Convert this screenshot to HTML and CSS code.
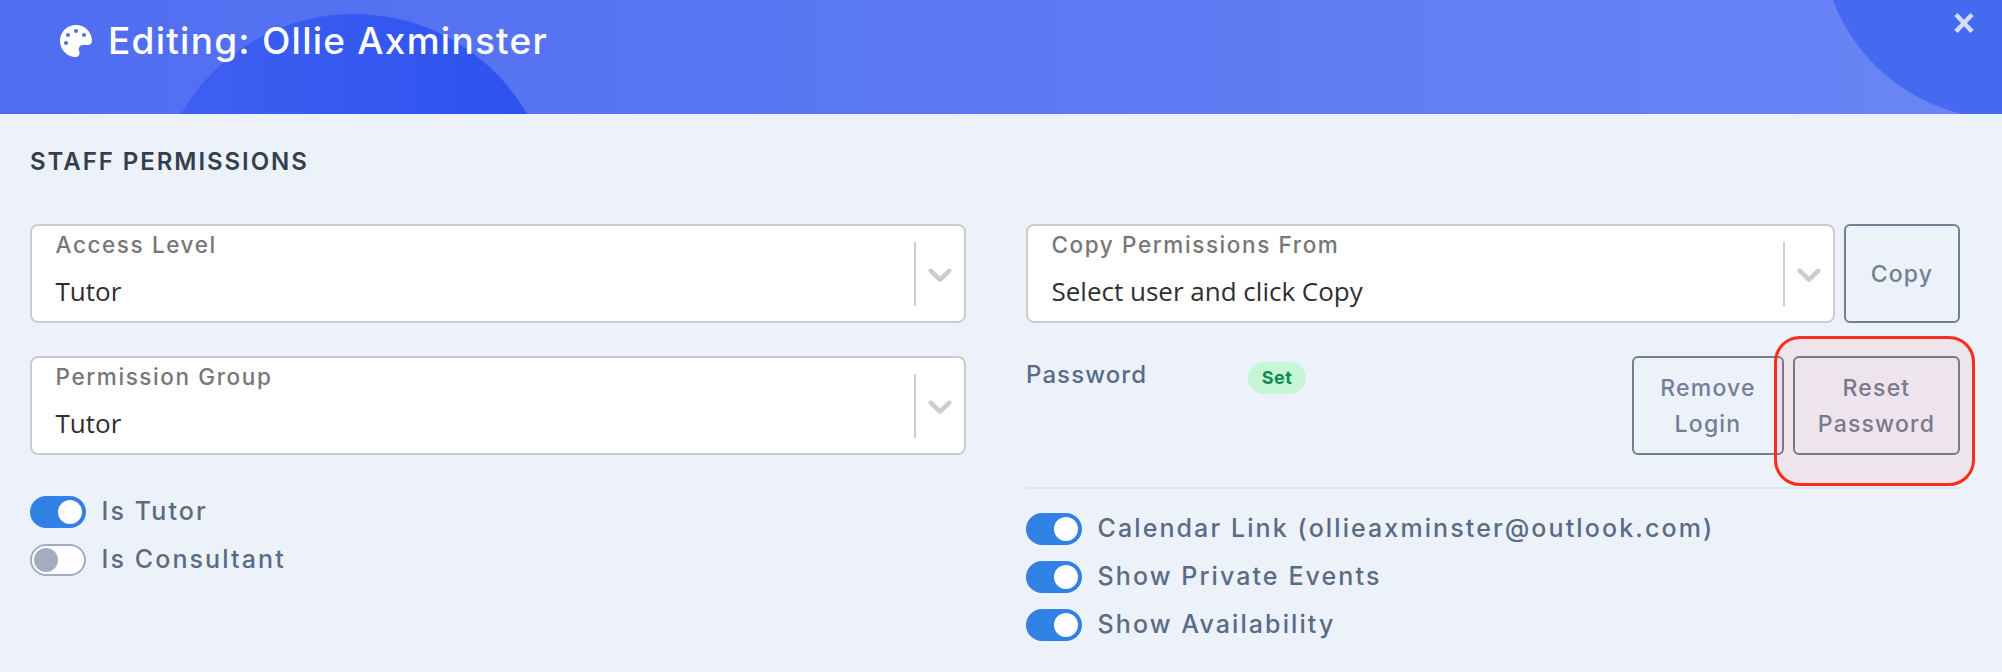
FILE: index.html
```html
<!DOCTYPE html>
<html lang="en">
<head>
<meta charset="utf-8">
<title>Editing: Ollie Axminster</title>
<link rel="stylesheet" href="styles.css">
</head>
<body>
<div class="modal">
  <header class="hero">
    <span class="blob blob-left"></span>
    <span class="blob blob-right"></span>
    <h1 class="hero-title">
      <svg class="palette" viewBox="0 0 512 512" aria-hidden="true"><path d="M204.3 5C104.9 24.4 24.8 104.3 5.2 203.4c-37 187 131.7 326.4 258.8 306.7 41.2-6.4 61.4-54.6 42.5-91.7-23.1-45.4 9.9-98.4 60.9-98.4h79.7c35.8 0 64.8-29.6 64.9-65.3C511.5 97.1 368.1-26.9 204.3 5zM96 320c-17.7 0-32-14.3-32-32s14.3-32 32-32 32 14.3 32 32-14.3 32-32 32zm32-128c-17.7 0-32-14.3-32-32s14.3-32 32-32 32 14.3 32 32-14.3 32-32 32zm128-64c-17.7 0-32-14.3-32-32s14.3-32 32-32 32 14.3 32 32-14.3 32-32 32zm128 64c-17.7 0-32-14.3-32-32s14.3-32 32-32 32 14.3 32 32-14.3 32-32 32z"/></svg>
      <span>Editing: Ollie Axminster</span>
    </h1>
    <svg class="close" viewBox="0 0 20 22" aria-hidden="true"><path d="M2 2.5 18 19.5M18 2.5 2 19.5"/></svg>
  </header>

  <main class="content">
    <h2 class="section-title">STAFF PERMISSIONS</h2>
    <div class="columns">
      <section class="col">
        <div class="select">
          <div class="select-body"><span class="select-label">Access Level</span><span class="select-value">Tutor</span></div>
          <span class="select-sep"></span>
          <svg class="chevron" viewBox="0 0 20 20" aria-hidden="true"><path d="M4.516 7.548c0.436-0.446 1.043-0.481 1.576 0l3.908 3.747 3.908-3.747c0.533-0.481 1.141-0.446 1.574 0 0.436 0.445 0.408 1.197 0 1.615-0.406 0.418-4.695 4.502-4.695 4.502-0.217 0.223-0.502 0.335-0.787 0.335s-0.57-0.112-0.789-0.335c0 0-4.287-4.084-4.695-4.502s-0.436-1.17 0-1.615z"/></svg>
        </div>
        <div class="select">
          <div class="select-body"><span class="select-label">Permission Group</span><span class="select-value">Tutor</span></div>
          <span class="select-sep"></span>
          <svg class="chevron" viewBox="0 0 20 20" aria-hidden="true"><path d="M4.516 7.548c0.436-0.446 1.043-0.481 1.576 0l3.908 3.747 3.908-3.747c0.533-0.481 1.141-0.446 1.574 0 0.436 0.445 0.408 1.197 0 1.615-0.406 0.418-4.695 4.502-4.695 4.502-0.217 0.223-0.502 0.335-0.787 0.335s-0.57-0.112-0.789-0.335c0 0-4.287-4.084-4.695-4.502s-0.436-1.17 0-1.615z"/></svg>
        </div>
        <div class="toggles toggles-left">
          <div class="toggle-row"><span class="toggle on"></span><span class="toggle-label">Is Tutor</span></div>
          <div class="toggle-row"><span class="toggle"></span><span class="toggle-label">Is Consultant</span></div>
        </div>
      </section>

      <section class="col">
        <div class="copy-row">
          <div class="select select-grow">
            <div class="select-body"><span class="select-label">Copy Permissions From</span><span class="select-value">Select user and click Copy</span></div>
            <span class="select-sep"></span>
            <svg class="chevron" viewBox="0 0 20 20" aria-hidden="true"><path d="M4.516 7.548c0.436-0.446 1.043-0.481 1.576 0l3.908 3.747 3.908-3.747c0.533-0.481 1.141-0.446 1.574 0 0.436 0.445 0.408 1.197 0 1.615-0.406 0.418-4.695 4.502-4.695 4.502-0.217 0.223-0.502 0.335-0.787 0.335s-0.57-0.112-0.789-0.335c0 0-4.287-4.084-4.695-4.502s-0.436-1.17 0-1.615z"/></svg>
          </div>
          <button class="btn btn-copy">Copy</button>
        </div>
        <div class="password-row">
          <span class="password-label">Password</span>
          <span class="badge">Set</span>
          <div class="password-actions">
            <button class="btn btn-remove">Remove<br>Login</button>
            <button class="btn btn-reset">Reset<br>Password</button>
          </div>
        </div>
        <hr class="divider">
        <div class="toggles">
          <div class="toggle-row"><span class="toggle on"></span><span class="toggle-label">Calendar Link (ollieaxminster@outlook.com)</span></div>
          <div class="toggle-row"><span class="toggle on"></span><span class="toggle-label">Show Private Events</span></div>
          <div class="toggle-row"><span class="toggle on"></span><span class="toggle-label">Show Availability</span></div>
        </div>
      </section>
    </div>
  </main>
</div>
</body>
</html>
```
FILE: styles.css
```css
* { box-sizing: border-box; }
html, body { margin: 0; height: 100%; }
body {
  background: #edf2fa;
  font-family: "Inter", "Liberation Sans", sans-serif;
  overflow: hidden;
}
.modal { height: 672px; }

.hero {
  position: relative;
  height: 114px;
  overflow: hidden;
  background: linear-gradient(90deg, #4f6df0 0%, #6a85f5 100%);
}
.blob { position: absolute; border-radius: 50%; }
.blob-left {
  left: 154px; top: 14px;
  width: 400px; height: 400px;
  background: linear-gradient(90deg, #3f61f1, #2c51ef);
}
.blob-right {
  left: 1821px; top: -249px;
  width: 368px; height: 368px;
  background: #4669f1;
}
.hero-title {
  position: relative;
  margin: 0;
  display: flex;
  align-items: center;
  gap: 16px;
  padding: 23px 0 0 60px;
  color: #fff;
  font-weight: 500;
  font-size: 37px;
  line-height: 36px;
  letter-spacing: 1.25px;
}
.palette { width: 32px; height: 32px; fill: #fff; flex: none; }
.close {
  position: absolute;
  right: 28px; top: 12px;
  width: 20px; height: 22px;
  fill: none;
  stroke: #d6dcfc;
  stroke-width: 4.5;
}

.content { padding: 36px 42px 0 30px; }
.section-title {
  margin: 0 0 50px;
  height: 24px;
  font-size: 24px;
  line-height: 24px;
  font-weight: 600;
  letter-spacing: 1.95px;
  color: #333f50;
}
.columns { display: grid; grid-template-columns: 936px 1fr; column-gap: 60px; }
.col { display: flex; flex-direction: column; }

.select {
  display: flex;
  align-items: center;
  height: 99px;
  background: #fff;
  border: 2px solid #cccccc;
  border-radius: 8px;
}
.select + .select { margin-top: 33px; }
.select-grow { flex: 1; }
.select-body {
  flex: 1;
  display: flex;
  flex-direction: column;
  align-self: stretch;
  padding: 4px 24px 0 23.5px;
}
.select-label {
  font-size: 22.5px;
  font-weight: 500;
  line-height: 30px;
  color: #777;
  letter-spacing: 1.6px;
}
.select-value {
  margin-top: 16px;
  font-family: "Open Sans", "Liberation Sans", sans-serif;
  font-size: 26px;
  line-height: 30px;
  color: #2f2f2f;
}
.select-sep { width: 2px; height: 64px; background: #cccccc; flex: none; }
.chevron { width: 40px; height: 40px; margin: 0 4px 0 4px; fill: #cccccc; flex: none; }

.copy-row { display: flex; gap: 9px; }
.btn {
  background: transparent;
  border: 2px solid #718096;
  border-radius: 6px;
  height: 99px;
  padding: 0;
  font-family: inherit;
  font-size: 23px;
  font-weight: 500;
  line-height: 36px;
  color: #718096;
  letter-spacing: 1.2px;
}
.btn-copy { width: 116px; flex: none; }

.password-row {
  display: flex;
  align-items: flex-start;
  margin-top: 33px;
}
.password-label {
  width: 222px;
  padding-top: 4px;
  font-size: 24px;
  font-weight: 500;
  line-height: 30px;
  color: #5a6b85;
  letter-spacing: 1.1px;
}
.badge {
  margin-top: 6px;
  width: 58px;
  height: 32px;
  border-radius: 16px;
  background: #c6f6d5;
  color: #0f8a4e;
  font-size: 18px;
  font-weight: 700;
  line-height: 32px;
  letter-spacing: 0.4px;
  text-align: center;
}
.password-actions { display: flex; gap: 9px; margin-left: auto; }
.btn-remove { width: 152px; }
.btn-reset { width: 167px; position: relative; }
.btn-reset::after {
  content: "";
  position: absolute;
  left: -21px; right: -17px; top: -22px; bottom: -33px;
  border: 3px solid #fb2c1c;
  border-radius: 26px;
  background: rgba(255, 0, 0, 0.055);
}

.divider {
  margin: 32px 0 0;
  height: 2px;
  border: 0;
  background: #dbe5f1;
}
.toggles { display: flex; flex-direction: column; gap: 16px; margin-top: 24px; }
.toggles-left { margin-top: 41px; }
.toggle-row { display: flex; align-items: center; gap: 15.5px; height: 32px; }
.toggle {
  position: relative;
  width: 56px;
  height: 32px;
  flex: none;
  border-radius: 16px;
  border: 2px solid #a0aec0;
  background: #fff;
}
.toggle::after {
  content: "";
  position: absolute;
  left: 2px; top: 2px;
  width: 24px; height: 24px;
  border-radius: 50%;
  background: #a0aec0;
}
.toggle.on { background: #3182e4; border-color: #3182e4; }
.toggle.on::after { left: 26px; background: #fff; }
.toggle-label {
  font-size: 25px;
  font-weight: 500;
  line-height: 30px;
  height: 32px;
  color: #5a6b85;
  letter-spacing: 2.1px;
}
```
